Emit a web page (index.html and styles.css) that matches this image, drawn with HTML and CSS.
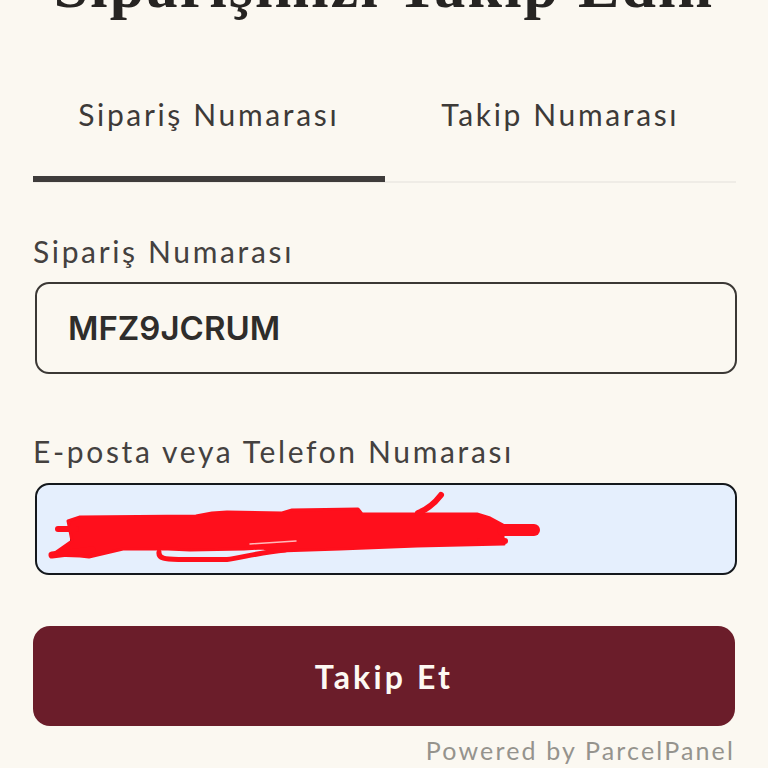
FILE: index.html
```html
<!DOCTYPE html>
<html lang="tr">
<head>
<meta charset="utf-8">
<title>Siparişinizi Takip Edin</title>
<link rel="stylesheet" href="styles.css">
</head>
<body>
<main class="page">
  <h1 class="title">Siparişinizi Takip Edin</h1>
  <nav class="tabs">
    <a class="tab tab-active">Sipariş Numarası</a>
    <a class="tab">Takip Numarası</a>
  </nav>
  <form class="form">
    <label class="field field-order">
      <span class="label">Sipariş Numarası</span>
      <input class="input" type="text" value="MFZ9JCRUM">
    </label>
    <label class="field field-contact">
      <span class="label">E-posta veya Telefon Numarası</span>
      <span class="input-wrap">
        <input class="input input-filled" type="text">
        <svg class="scribble" viewBox="0 0 768 100" aria-hidden="true">
          <path class="scribble-dark" d="M70 56 L76 54 L76 62 L70 62 Z M248 62 L260 62 L260 67 L248 67 Z"/>
          <path class="scribble-fill" d="M80 38 L196 37 L212 34 L227 33 L282 34 L292 31 L358 30 L362 35 L477 35 L490 39 L503 46 L503 58 L504 65 L417 67 L340 70 L279 72 L262 69 L244 70 L190 71 L168 70 L123 70 L89 78 L80 77 L52 76 L72 62 L71 57 L68 42 Z"/>
          <path class="scribble-line" d="M159 73 C158 80 166 80 180 80.500 L227 80.500 C240 79 262 73 285 71"/>
          <path class="scribble-line scribble-thin" d="M418 34 C428 30 435 24 441 16"/>
          <path class="scribble-line scribble-end" d="M503 51 L534 51"/>
          <path class="scribble-line scribble-tail" d="M52 76 L92 71"/>
          <path class="scribble-line scribble-thin" d="M58 50 L76 50"/>
          <path class="scribble-line scribble-thin" d="M480 62 L505 62"/>
          <path class="scribble-gap" d="M250 65 L296 62"/>
        </svg>
      </span>
    </label>
    <button class="submit" type="button">Takip Et</button>
  </form>
  <p class="powered">Powered by ParcelPanel</p>
</main>
</body>
</html>
```
FILE: styles.css
```css
* { box-sizing: border-box; }
html, body { margin: 0; height: 100%; }
body {
  background: #fbf8f1;
  color: #3d3a38;
  font-family: "Lato", "Noto Sans", sans-serif;
  overflow: hidden;
}
.page {
  width: 768px;
  height: 768px;
  padding: 0 32px 0 33px;
  overflow: hidden;
}
.title {
  margin: -46px 0 0 -1px;
  font-family: "Liberation Serif", serif;
  font-size: 62px;
  line-height: 64px;
  font-weight: 700;
  letter-spacing: 2.2px;
  text-align: center;
  color: #262422;
  white-space: nowrap;
}
.tabs {
  display: flex;
  margin-top: 63px;
  width: 703px;
  border-bottom: 2px solid #efece6;
}
.tab {
  flex: 1;
  height: 100px;
  padding-top: 14px;
  font-size: 30px;
  line-height: 38px;
  letter-spacing: 2.65px;
  text-align: center;
  margin-bottom: -2px;
}
.tab-active { border-bottom: 6px solid #3f3c3b; height: 101px; margin-bottom: -1px; }
.form { display: flex; flex-direction: column; }
.field { display: flex; flex-direction: column; }
.field-order { margin-top: 48px; }
.field-contact { margin-top: 57px; }
.label {
  font-size: 30px;
  line-height: 40px;
  letter-spacing: 2.65px;
  color: #44413f;
}
.input-wrap { position: relative; display: block; }
.input {
  display: block;
  width: 702px;
  height: 92px;
  margin: 11px 0 0 2px;
  padding: 0 31px;
  border: 2px solid #3b3835;
  border-radius: 14px;
  background: transparent;
  font-family: "Inter", sans-serif;
  font-size: 33px;
  font-weight: 600;
  color: #2f2d2b;
  outline: none;
}
.input-filled {
  margin-top: 12px;
  background: #e5effd;
  border-color: #14181c;
}
.scribble {
  position: absolute;
  left: -33px;
  top: 8px;
  width: 768px;
  height: 100px;
  pointer-events: none;
}
.scribble-dark { fill: #2a1a1a; }
.scribble-fill { fill: #ff0f1c; stroke: #ff0f1c; stroke-width: 3; stroke-linejoin: round; }
.scribble-line { fill: none; stroke: #ff0f1c; stroke-width: 5; stroke-linecap: round; }
.scribble-thin { stroke-width: 6; }
.scribble-end { stroke-width: 12; }
.scribble-tail { stroke-width: 7; }
.scribble-gap { fill: none; stroke: #ffb9b9; stroke-width: 1.500; stroke-linecap: round; }
.submit {
  display: block;
  width: 702px;
  height: 100px;
  margin-top: 51px;
  border: 0;
  border-radius: 17px;
  background: #6b1d2a;
  color: #fdf9f3;
  font-family: "Lato", sans-serif;
  font-size: 32px;
  font-weight: 700;
  letter-spacing: 3.2px;
}
.powered {
  margin: 7px 0 0;
  width: 702px;
  text-align: right;
  font-size: 25px;
  line-height: 34px;
  letter-spacing: 2.15px;
  color: #95938d;
}
```
